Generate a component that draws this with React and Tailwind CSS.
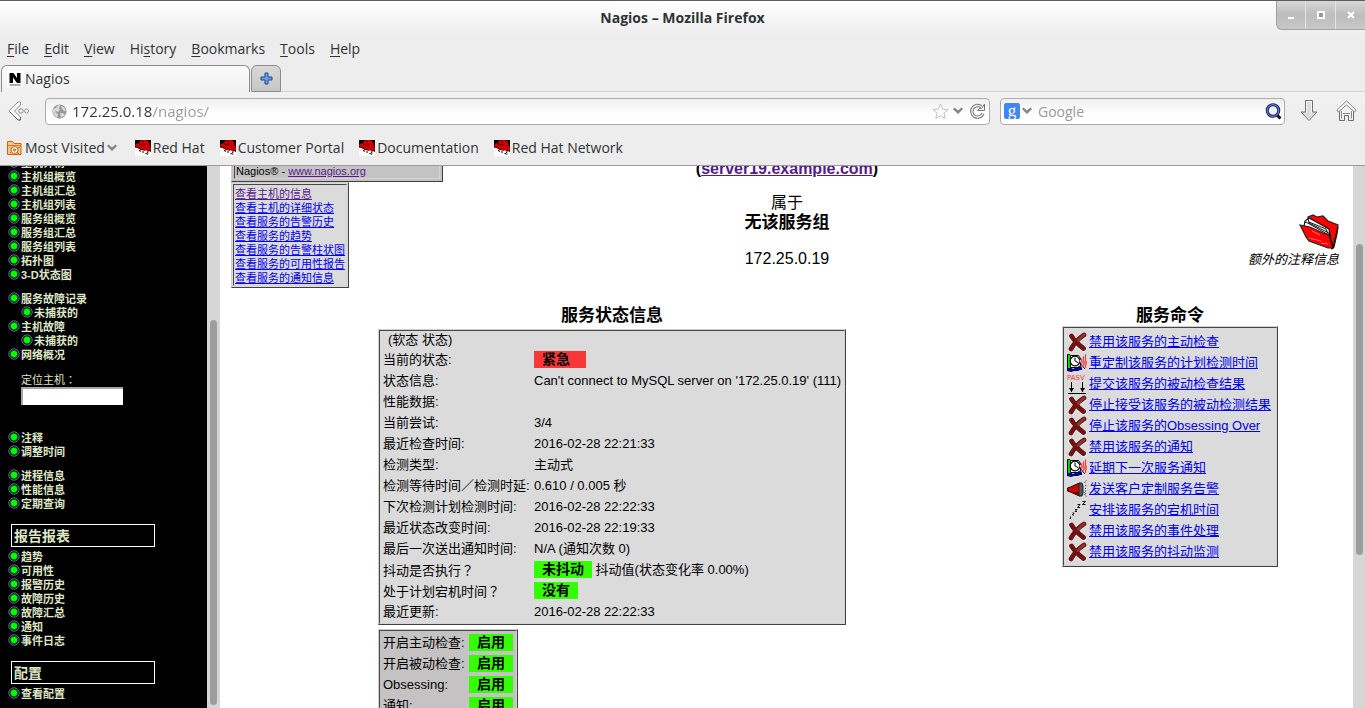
import React from "react";

const uiFont = 'font-["Open_Sans","Noto_Sans",sans-serif]';
const pageFont = 'font-["Liberation_Sans","Noto_Sans_CJK_SC",sans-serif]';

function RedHatIcon() {
  return (
    <svg width="16" height="16" viewBox="0 0 16 16" className="shrink-0" aria-hidden="true">
      <rect width="16" height="16" fill="#fff" />
      <path d="M0 0h16v12l-2-1-2-1-6 0-3-2-3 0z" fill="#000" />
      <path d="M5 .500l6-.500 3 2 .500 3 1.500 3v2l-3 1-5-1-4-1-3-2-1-2 2-1.500 2-.500z" fill="#cc0000" />
      <path d="M4 3.500l3 1.500 3 0M7 1l2 1.500" stroke="#4a0000" fill="none" />
      <path d="M2 6.500l4 3 4 1" stroke="#600" strokeWidth="0.800" fill="none" />
      <path d="M0 7.500l2 .500 3 2.500 5 .800 2 .700-1 2-9 1-2-3z" fill="#fff" />
      <path d="M4 10.500l2 .800M7 12h2M10.500 13.500l1 0M12 12.500l1.500-1M13.500 14h-2" stroke="#000" strokeWidth="1.100" fill="none" />
    </svg>
  );
}

function Chevron() {
  return (
    <svg width="10" height="8" viewBox="0 0 10 8" className="shrink-0" aria-hidden="true">
      <path d="M0 2l5 5 5-5-1.500-1.500-3.500 3-3.500-3z" fill="#848484" />
    </svg>
  );
}

function CrossIcon() {
  return (
    <svg width="20" height="20" viewBox="0 0 20 20" aria-hidden="true">
      <path d="M4 4.500Q8 10 16.500 17M17 3.500Q9 8 4 17.500" stroke="#f4f0f0" strokeWidth="6" fill="none" strokeLinecap="round" />
      <path d="M4.500 4Q8 10 16.500 16.500M17 3Q9 8 4 17" stroke="#6e1212" strokeWidth="4.800" fill="none" strokeLinecap="round" />
      <path d="M11 8.500Q14 5 17 3" stroke="#8a3838" strokeWidth="2.500" fill="none" strokeLinecap="round" />
    </svg>
  );
}

function DelayIcon() {
  return (
    <svg width="20" height="20" viewBox="0 0 20 20" aria-hidden="true">
      <path d="M0 18l0-3 3-1 3 2 4-2 4-1 1 2 0 2-2 0-2 1-4 0-3 1z" fill="#00008b" />
      <path d="M0.500 1.500h2l1 1v12l-1 1h-2z" fill="#0d0" stroke="#000" />
      <path d="M3.500 2.500h8l2 3v7l-3 2H3.500z" fill="#fff" stroke="#000" />
      <circle cx="8" cy="8" r="4.800" fill="#fff" stroke="#000" strokeWidth="1.300" />
      <path d="M8 4.500V8l3 1.500" stroke="#000" fill="none" />
      <path d="M12 8l8-7v15z" fill="#ffc0c0" />
      <path d="M12 8h8M14 6h6M14 10h6M16 4h4M16 12h4M18 2h2M18 14h2" stroke="#f00" strokeWidth="1.200" strokeDasharray="1 1" />
      <path d="M13 7h7M15 5h5M14 9h6M16 11h4M17 3h3M17 13h3" stroke="#f00" strokeWidth="1" strokeDasharray="1 1" strokeDashoffset="1" />
      <path d="M12 9l6 7" stroke="#000" />
    </svg>
  );
}

function PassiveIcon() {
  return (
    <svg width="20" height="20" viewBox="0 0 20 20" aria-hidden="true">
      <text x="0" y="6" fontSize="7" fill="#e33" className='font-["DejaVu_Sans"]'>PASV</text>
      <path d="M4.500 8v10M15.500 8v10M1 19.500h18" stroke="#000" />
      <path d="M2 14h5l-2.500 4zM13 14h5l-2.500 4z" fill="#000" />
    </svg>
  );
}

function HornIcon() {
  return (
    <svg width="20" height="20" viewBox="0 0 20 20" aria-hidden="true">
      <path d="M0.500 9l3-1 9-4v13l-9-4-3-1z" fill="#d00000" stroke="#000" />
      <path d="M3 13l9 4v-4z" fill="#700" />
      <path d="M12 4h3l1 3v7l-1 3h-3z" fill="#555" stroke="#222" />
      <path d="M17.500 4l2-3M18 7l2-1M18 9.500h2M18 12h2M17.500 15l2 3M17 13l2 2" stroke="#333" strokeDasharray="1 1" />
    </svg>
  );
}

function SleepIcon() {
  return (
    <svg width="20" height="20" viewBox="0 0 20 20" aria-hidden="true">
      <path d="M15.500 1.500h3l-3 3h3M10.500 4.500h2.500l-2.500 3h2.500M8 9.500h2l-2 2h2M5.500 13h1.500l-1.500 2h1.500M3 17h1l-1 1.500h1" stroke="#111" fill="none" />
    </svg>
  );
}

function FolderIcon() {
  return (
    <svg width="40" height="36" viewBox="0 0 40 36" aria-hidden="true">
      <path d="M9 3l5-2 4 2 6-1 5 5 10 4-1 9-3 13-2 2L9 10z" fill="#f00" stroke="#222" strokeWidth="1.200" />
      <path d="M5 12l1-5 4-3 20 11 2 14z" fill="#fff" stroke="#111" strokeWidth="1.200" />
      <path d="M5 10l2-2 21 12M9 4l1 5 18 9M10 8l17 7 3 7" fill="none" stroke="#111" strokeWidth="1" />
      <path d="M1 11l10 2 13 6 6 2 4 13-5 0-19-7-3-4z" fill="#f00" stroke="#222" strokeWidth="1.200" />
      <path d="M34 34l5-21M34 34l-4-16" stroke="#111" strokeWidth="1.300" />
      <path d="M10 24l12 3M13 17l8 4M22 29l7 1" stroke="#ff7070" strokeWidth="1" />
    </svg>
  );
}

function GreenDot() {
  return (
    <svg width="12" height="12" viewBox="0 0 12 12" className="shrink-0" aria-hidden="true">
      <circle cx="6" cy="6" r="5.200" fill="#0a0a14" stroke="#6a6aa0" strokeWidth="1" />
      <circle cx="6" cy="6" r="3.700" fill="#00ff00" stroke="#073807" strokeWidth="0.600" />
    </svg>
  );
}

function NavItem({ children, nested }) {
  return (
    <li className={nested ? "ml-[13px]" : ""}>
      <a href="#" className="flex h-3.5 items-center gap-px whitespace-nowrap text-[11px] leading-[14px] font-bold text-[#dee7c6]">
        <span className="flex h-3.5 items-start">
          <GreenDot />
        </span>
        {children}
      </a>
    </li>
  );
}

function NavList({ items, className }) {
  return (
    <ul className={"pl-2 " + (className || "")}>
      {items.map((t, i) => (
        <NavItem key={i} nested={t.startsWith("未捕获")}>{t}</NavItem>
      ))}
    </ul>
  );
}

function NavTitle({ children }) {
  return (
    <h2 className="mt-[13px] mb-[3px] ml-[11px] flex h-[23px] w-36 items-center border border-white pl-0.5 text-sm leading-5 font-bold text-[#dee7c6]">
      {children}
    </h2>
  );
}

function FullWidth({ children }) {
  return <span className='font-["Noto_Sans_CJK_TC",sans-serif]'>{children}</span>;
}

function Sidebar() {
  return (
    <nav className="w-[207px] shrink-0 overflow-hidden bg-black">
      <NavList
        className="-mt-2.5"
        items={["主机详情", "主机组概览", "主机组汇总", "主机组列表", "服务组概览", "服务组汇总", "服务组列表", "拓扑图", "3-D状态图"]}
      />
      <NavList className="mt-2.5" items={["服务故障记录", "未捕获的", "主机故障", "未捕获的", "网络概况"]} />
      <form className="mt-2.5 mb-[26px] ml-[21px] flex flex-col">
        <label htmlFor="host" className="text-[11px] leading-[14px] text-[#dee7c6]">定位主机<FullWidth>：</FullWidth></label>
        <input id="host" className="h-[18px] w-[102px] border-t-2 border-l-2 border-t-[#a8a8a8] border-l-[#a8a8a8] bg-white px-1 text-[11px]" />
      </form>
      <NavList items={["注释", "调整时间"]} />
      <NavList className="mt-2.5" items={["进程信息", "性能信息", "定期查询"]} />
      <NavTitle>报告报表</NavTitle>
      <NavList items={["趋势", "可用性", "报警历史", "故障历史", "故障汇总", "通知", "事件日志"]} />
      <NavTitle>配置</NavTitle>
      <NavList items={["查看配置"]} />
    </nav>
  );
}

function Bevel({ children, className, inner }) {
  return (
    <div className={"border border-t-[#cfcfcf] border-r-[#404040] border-b-[#404040] border-l-[#cfcfcf] " + className}>
      <div className={"h-full border border-t-[#484848] border-r-[#d4d4d4] border-b-[#d4d4d4] border-l-[#484848] " + (inner || "")}>
        {children}
      </div>
    </div>
  );
}

function Badge({ children, red }) {
  return (
    <span className={"inline-block h-[17px] pl-2 align-top text-sm leading-[17px] font-bold " + (red ? "bg-[#f83838] pr-4" : "bg-[#33ff00] pr-2")}>
      {children}
    </span>
  );
}

const status = [
  ["当前的状态:", <Badge red>紧急</Badge>],
  ["状态信息:", "Can't connect to MySQL server on '172.25.0.19' (111)"],
  ["性能数据:", ""],
  ["当前尝试:", "3/4"],
  ["最近检查时间:", "2016-02-28 22:21:33"],
  ["检测类型:", "主动式"],
  ["检测等待时间／检测时延:", "0.610 / 0.005 秒"],
  ["下次检测计划检测时间:", "2016-02-28 22:22:33"],
  ["最近状态改变时间:", "2016-02-28 22:19:33"],
  ["最后一次送出通知时间:", "N/A (通知次数 0)"],
  [<>抖动是否执行<FullWidth>？</FullWidth></>, <><Badge>未抖动</Badge> 抖动值(状态变化率 0.00%)</>],
  [<>处于计划宕机时间<FullWidth>？</FullWidth></>, <Badge>没有</Badge>],
  ["最近更新:", "2016-02-28 22:22:33"],
];

const commands = [
  [CrossIcon, "禁用该服务的主动检查"],
  [DelayIcon, "重定制该服务的计划检测时间"],
  [PassiveIcon, "提交该服务的被动检查结果"],
  [CrossIcon, "停止接受该服务的被动检测结果"],
  [CrossIcon, "停止该服务的Obsessing Over"],
  [CrossIcon, "禁用该服务的通知"],
  [DelayIcon, "延期下一次服务通知"],
  [HornIcon, "发送客户定制服务告警"],
  [SleepIcon, "安排该服务的宕机时间"],
  [CrossIcon, "禁用该服务的事件处理"],
  [CrossIcon, "禁用该服务的抖动监测"],
];

function Row({ label, children, first }) {
  return (
    <tr className="h-[21px] leading-[17px]">
      <th scope="row" className={"p-0 pb-0.5 pl-[3px] text-left font-normal " + first}>{label}</th>
      <td className="p-0 pb-0.5 pl-[3px]">{children}</td>
    </tr>
  );
}

function MainPage() {
  return (
    <main className="min-w-0 flex-1 overflow-hidden bg-white pr-2.5 pl-[11px] text-black">
      <section className="-mt-2 grid grid-cols-3">
        <div className="text-[11px] leading-[14px]">
          <Bevel className="h-6 w-[212px] bg-[#c4c2c2] p-0.5" inner="flex items-end">
            <p className="pl-px leading-[14px]">Nagios® - <a href="#" className="text-[#551a8b] underline">www.nagios.org</a></p>
          </Bevel>
          <Bevel className="w-[118px] bg-[#dbdbdb] p-px" inner="pt-0.5">
            <ul className="whitespace-nowrap pl-px">
              {["查看主机的信息", "查看主机的详细状态", "查看服务的告警历史", "查看服务的趋势", "查看服务的告警柱状图", "查看服务的可用性报告", "查看服务的通知信息"].map((t, i) => (
                <li key={t} className="h-3.5">
                  <a href="#" className={"underline " + (i === 0 ? "text-[#551a8b]" : "text-[#0000ee]")}>{t}</a>
                </li>
              ))}
            </ul>
          </Bevel>
        </div>
        <div className="pt-px text-center text-base leading-5">
          <p className="font-bold">(<a href="#" className="text-[#551a8b] underline">server19.example.com</a>)</p>
          <p className="mt-3.5">属于</p>
          <p className="text-[17px] leading-5 font-bold">无该服务组</p>
          <p className="mt-4">172.25.0.19</p>
        </div>
        <a href="#" className="mt-14 mr-1 flex flex-col items-end justify-self-end text-[13px] leading-5 italic">
          <FolderIcon />
          额外的注释信息
        </a>
      </section>

      <section className="mt-[18px] grid grid-cols-[762fr_346fr] items-start gap-1 text-[13px] leading-5">
        <div className="flex flex-col items-center">
          <h2 className="text-[17px] leading-5 font-bold">服务状态信息</h2>
          <div className="mt-[3px] w-[468px]">
            <Bevel className="bg-[#dbdbdb]">
              <table className="w-full border-collapse whitespace-nowrap">
                <tbody>
                  <tr className="h-[19px] leading-[17px]">
                    <td colSpan={2} className="p-0 pb-0.5 pl-2">(软态 状态)</td>
                  </tr>
                  {status.map(([k, v], i) => <Row key={i} label={k} first="w-[151px]">{v}</Row>)}
                </tbody>
              </table>
            </Bevel>
            <Bevel className="mt-1 w-[140px] bg-[#c4c2c2]" inner="pt-0.5">
              <table className="w-full border-collapse whitespace-nowrap">
                <tbody>
                  {["开启主动检查:", "开启被动检查:", "Obsessing:", "通知:"].map((k) => (
                    <Row key={k} label={k} first="w-[86px]"><Badge>启用</Badge></Row>
                  ))}
                </tbody>
              </table>
            </Bevel>
          </div>
        </div>
        <div className="flex flex-col items-center">
          <h2 className="text-[17px] leading-5 font-bold">服务命令</h2>
          <Bevel className="w-[216px] bg-[#dbdbdb]" inner="py-[3px] pl-[3px]">
            <ul className="whitespace-nowrap">
              {commands.map(([Icon, text]) => (
                <li key={text} className="flex h-[21px] items-center gap-0.5">
                  <Icon />
                  <a href="#" className="text-[#0000ee] underline">{text}</a>
                </li>
              ))}
            </ul>
          </Bevel>
        </div>
      </section>
    </main>
  );
}

const menus = [["", "F", "ile"], ["", "E", "dit"], ["", "V", "iew"], ["Hi", "s", "tory"], ["", "B", "ookmarks"], ["", "T", "ools"], ["", "H", "elp"]];

function BrowserChrome() {
  return (
    <header className={"border-b border-[#9c9c9c] bg-[#ededed] text-sm text-[#2e3436] " + uiFont}>
      <div className="grid h-9 grid-cols-[1fr_auto_1fr] border-t border-[#5c5c5c] bg-linear-to-b from-white to-[#ededed]">
        <span />
        <h1 className="pb-0.5 self-center text-sm leading-5 font-bold">Nagios – Mozilla Firefox</h1>
        <div className="flex h-[29px] justify-self-end overflow-hidden rounded-bl-md border-b border-l border-[#a0a0a0] bg-linear-to-b from-[#d8d8d8] via-[#bcbcbc] to-[#c8c8c8]">
          <button aria-label="Minimize" className="flex w-[29px] items-center justify-center border-r border-[#e4e4e4]">
            <svg width="8" height="8" viewBox="0 0 8 8"><path d="M1 6h6v2H1z" fill="#fff" /></svg>
          </button>
          <button aria-label="Maximize" className="flex w-[30px] items-center justify-center border-r border-[#e4e4e4]">
            <svg width="8" height="8" viewBox="0 0 8 8"><path d="M1 1h6v6H1z" fill="#999" stroke="#fff" strokeWidth="2" /></svg>
          </button>
          <button aria-label="Close" className="flex w-[29px] items-center justify-center">
            <svg width="8" height="8" viewBox="0 0 8 8"><path d="M1 1l6 6M7 1l-6 6" stroke="#fff" strokeWidth="2.200" /></svg>
          </button>
        </div>
      </div>
      <div className="flex h-[29px] gap-[15px] pb-[3px] pl-[7px]">
        {menus.map(([a, b, c]) => (
          <button key={b + c} className="leading-5">{a}<span className="underline underline-offset-2">{b}</span>{c}</button>
        ))}
      </div>
      <div className="flex h-[27px] items-end pl-px">
        <button className="flex h-[27px] w-[249px] items-center gap-0.5 rounded-t-md border border-b-0 border-[#8c8c8c] bg-linear-to-b from-[#fafafa] to-[#f1f1f1] pl-[5px]">
          <svg width="16" height="16" viewBox="0 0 16 16" aria-hidden="true">
            <rect width="16" height="16" fill="#fff" />
            <path d="M2.500 2h4l3.500 5V2h3.500v10H10L6 6.500V12H2.500z" fill="#000" />
            <path d="M2.500 14h11" stroke="#555" />
          </svg>
          Nagios
        </button>
        <button aria-label="New tab" className="ml-px flex h-[27px] w-[30px] items-center justify-center rounded-t-md border border-[#8c8c8c] bg-linear-to-b from-[#d8d8d8] to-[#c6c6c6]">
          <svg width="13" height="13" viewBox="0 0 13 13"><path d="M5 1h3v4h4v3H8v4H5V8H1V5h4z" fill="#6b9be0" stroke="#204a87" strokeLinejoin="round" /></svg>
        </button>
        <span className="flex-1 border-b border-[#d0d0d0]" />
      </div>
      <div className="flex h-[38px] items-center bg-linear-to-b from-[#f1f1f1] to-[#ededed] pr-2 pl-2">
        <button aria-label="Back" className="mr-4">
          <svg width="21" height="20" viewBox="0 0 21 20">
            <path d="M10 1h2.500v3L6.500 10l6 6v3H10L1 10z" fill="#f8f8f8" stroke="#999" />
            <path d="M2 11l8 8h2.500v-3" fill="none" stroke="#666" />
            <circle cx="13" cy="10" r="2.200" fill="#f4f4f4" stroke="#888" />
            <circle cx="18.500" cy="10" r="2" fill="#f4f4f4" stroke="#999" />
          </svg>
        </button>
        <div className="flex h-[27px] min-w-0 flex-1 items-center rounded border border-[#acacac] bg-linear-to-b from-[#efefef] to-white to-60% pr-1 pl-1.5">
          <svg width="15" height="15" viewBox="0 0 15 15" className="shrink-0" aria-hidden="true">
            <circle cx="7.500" cy="7.500" r="7" fill="#989898" />
            <path d="M1 5l3-1 2-3 2 0-1 3 1 2-2 2-2-1-1 1 3 2-1 4-3-3-1-3zM9 2l3 1 2 4-2 0-2-2zM8 9l3 0 2 2-4 3z" fill="#d8d8d8" />
          </svg>
          <input
            aria-label="Address"
            defaultValue="172.25.0.18/nagios/"
            className="ml-[5px] min-w-0 flex-1 bg-linear-to-r from-[#2e3436] from-[81px] to-[#999999] to-[81px] bg-clip-text text-[15px] leading-5 text-transparent outline-none"
          />
          <svg width="17" height="17" viewBox="0 0 17 17" className="shrink-0" aria-hidden="true">
            <path d="M8.500 1l2.200 5 5.300.6-4 3.600 1.200 5.300-4.700-2.700-4.700 2.700L5 10.200 1 6.600 6.300 6z" fill="#fcfcfc" stroke="#c2c2c2" strokeLinejoin="round" />
          </svg>
          <span className="mx-1"><Chevron /></span>
          <button aria-label="Reload" className="ml-0.5">
            <svg width="16" height="16" viewBox="0 0 16 16">
              <path d="M12.500 4A5.800 5.800 0 1 0 14 10.500" fill="none" stroke="#747474" strokeWidth="3.400" />
              <path d="M12.500 4A5.800 5.800 0 1 0 14 10.500" fill="none" stroke="#f4f4f4" strokeWidth="1.400" />
              <path d="M15.500 1v6.500H8.500l2.500-2.500 1.500.500 1-1z" fill="#f4f4f4" stroke="#747474" />
            </svg>
          </button>
        </div>
        <div className="ml-2.5 flex h-[27px] w-[285px] items-center rounded border border-[#acacac] bg-linear-to-b from-[#efefef] to-white to-60% pr-0.5 pl-[3px]">
          <span className="flex size-4 shrink-0 items-center justify-center rounded-xs bg-[#4285f4] pb-0.5 font-['Liberation_Serif',serif] text-[17px] leading-none text-white">g</span>
          <span className="ml-[2px]"><Chevron /></span>
          <input aria-label="Search" placeholder="Google" className="ml-1.5 min-w-0 flex-1 pt-px text-[14px] leading-5 outline-none placeholder:text-[#999999]" />
          <button aria-label="Go">
            <svg width="17" height="17" viewBox="0 0 17 17">
              <path d="M12 12l3.500 3.500" stroke="#111" strokeWidth="3" />
              <circle cx="8" cy="7.500" r="5.800" fill="#eef0f6" stroke="#18245c" strokeWidth="3" />
              <circle cx="8" cy="7.500" r="5.800" fill="none" stroke="#6078c4" strokeWidth="1.200" />
            </svg>
          </button>
        </div>
        <button aria-label="Downloads" className="ml-[15px]">
          <svg width="18" height="22" viewBox="0 0 18 22">
            <path d="M5.500.5h7V12h4.500L9 20.500 1 12h4.500z" fill="#d9dfe0" stroke="#707574" />
            <path d="M6.500 12V1.500h5V13" fill="none" stroke="#f6f6f6" />
          </svg>
        </button>
        <button aria-label="Home" className="ml-[18px]">
          <svg width="21" height="22" viewBox="0 0 21 22">
            <path d="M3.500 11v9.500h5v-5h4v5h5V11l-7-6.500z" fill="#f2f2f2" stroke="#6c6c6c" />
            <path d="M5.500 11v7.500M15.500 11v7.500M7 13.500h7" stroke="#8a8a8a" />
            <path d="M10.500 1L.8 10l1.600 2 8.100-7 8.100 7 1.600-2z" fill="#f8f8f8" stroke="#8c8c8c" />
          </svg>
        </button>
      </div>
      <div className="flex h-[35px] items-center gap-[15px] pt-px pl-[7px] whitespace-nowrap">
        <button className="flex items-center">
          <svg width="15" height="16" viewBox="0 0 15 16" className="mr-[3px]" aria-hidden="true">
            <path d="M.5 14.500v-13h5l1.500 2h7v11z" fill="#f6c48c" stroke="#c8640c" />
            <path d="M1 5.500h13" stroke="#d87820" />
            <circle cx="7.500" cy="10" r="3.500" fill="#fff" stroke="#c8640c" />
            <circle cx="7.500" cy="10" r="1.200" fill="#f6c48c" stroke="#c8640c" />
            <path d="M10 12.500l2.500 2M3 7.500l1 1M3 13l1-1M11 8l2-1" stroke="#c8640c" />
          </svg>
          Most Visited
          <span className="ml-0.5"><Chevron /></span>
        </button>
        {["Red Hat", "Customer Portal", "Documentation", "Red Hat Network"].map((t, i) => (
          <a key={t} href="#" className={"flex items-center gap-0.5 " + (i === 0 ? "ml-[3px]" : "")}>
            <RedHatIcon />
            {t}
          </a>
        ))}
      </div>
    </header>
  );
}

export default function App() {
  return (
    <div className="flex h-screen flex-col overflow-hidden">
      <BrowserChrome />
      <div className={"flex min-h-0 flex-1 " + pageFont}>
        <Sidebar />
        <div className="flex w-[13px] shrink-0 flex-col items-center bg-[#d6d6d6] pb-[3px]">
          <div className="mt-[154px] w-[7px] flex-1 rounded-full bg-[#9c9d9f]" />
        </div>
        <MainPage />
        <div className="flex w-3 shrink-0 flex-col items-center bg-[#d6d6d6] pb-[153px]">
          <div className="mt-[78px] w-[7px] flex-1 rounded-full bg-[#9c9d9f]" />
        </div>
      </div>
    </div>
  );
}
